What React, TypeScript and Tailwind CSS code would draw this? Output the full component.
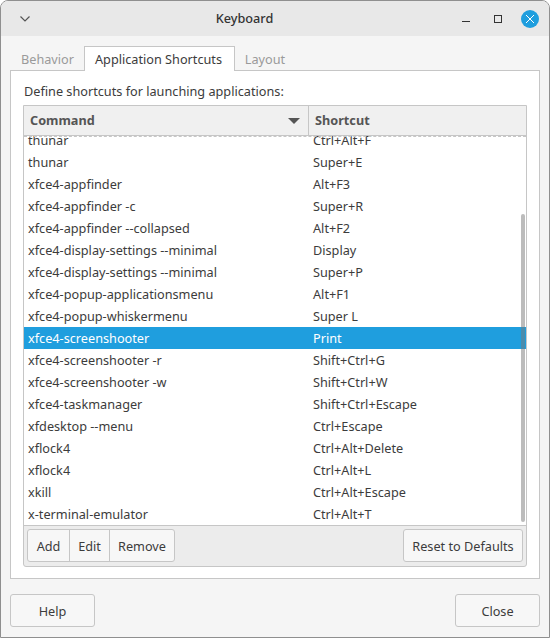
const rows: [string, string][] = [
  ["thunar", "Ctrl+Alt+F"],
  ["thunar", "Super+E"],
  ["xfce4-appfinder", "Alt+F3"],
  ["xfce4-appfinder -c", "Super+R"],
  ["xfce4-appfinder --collapsed", "Alt+F2"],
  ["xfce4-display-settings --minimal", "Display"],
  ["xfce4-display-settings --minimal", "Super+P"],
  ["xfce4-popup-applicationsmenu", "Alt+F1"],
  ["xfce4-popup-whiskermenu", "Super L"],
  ["xfce4-screenshooter", "Print"],
  ["xfce4-screenshooter -r", "Shift+Ctrl+G"],
  ["xfce4-screenshooter -w", "Shift+Ctrl+W"],
  ["xfce4-taskmanager", "Shift+Ctrl+Escape"],
  ["xfdesktop --menu", "Ctrl+Escape"],
  ["xflock4", "Ctrl+Alt+Delete"],
  ["xflock4", "Ctrl+Alt+L"],
  ["xkill", "Ctrl+Alt+Escape"],
  ["x-terminal-emulator", "Ctrl+Alt+T"],
];

export default function App() {
  return (
    <div className="w-[550px] h-[638px] bg-white font-['Noto_Sans',sans-serif] text-[12.7px] text-[#3c3c3c]">
      <div className="h-full flex flex-col rounded-t-[8px] border border-[#8f8f8f] bg-[#f5f5f5] overflow-hidden">
        <div className="h-[35px] shrink-0 bg-[#e8e8e8] flex items-center justify-between pl-[18px] pr-[10px] relative">
          <svg width="12" height="8" viewBox="0 0 12 8" fill="none" stroke="#555" strokeWidth="1.2">
            <path d="M1.5 1.5 L6 6 L10.5 1.5" />
          </svg>
          <div className="font-medium text-[#333] mr-[4px]">Keyboard</div>
          <div className="flex items-center">
            <div className="w-[8px] h-[1.5px] bg-[#333] mt-[6px] mr-[24px]"></div>
            <div className="w-[8px] h-[8px] border-[1.5px] border-[#333] mr-[19px]"></div>
            <div className="w-[18px] h-[18px] rounded-full bg-[#1f9ede] flex items-center justify-center">
              <svg width="10" height="10" viewBox="0 0 10 10" stroke="#fff" strokeWidth="1">
                <path d="M1 1 L9 9 M9 1 L1 9" />
              </svg>
            </div>
          </div>
        </div>

        <div className="flex-1 flex flex-col px-[9px]">
          <div className="flex h-[35px] items-end pl-[1px] shrink-0 -mb-[1px] relative">
            <div className="w-[73px] h-[24px] pt-[2px] flex items-center justify-center text-[#9a9a9a]">Behavior</div>
            <div className="w-[151px] h-[25px] pt-[2px] pr-[2px] flex items-center justify-center bg-white border border-b-0 border-[#c6c6c6] text-[#3c3c3c]">
              Application Shortcuts
            </div>
            <div className="w-[60px] h-[24px] pt-[2px] flex items-center justify-center text-[#9a9a9a]">Layout</div>
          </div>

          <div className="h-[509px] shrink-0 border border-[#c6c6c6] bg-white pt-[10px] px-[12px]">
            <div className="h-[24px] leading-[20px] pl-[1px]">Define shortcuts for launching applications:</div>
            <div className="h-[462px] border border-[#c6c6c6] rounded-b-[3px] flex flex-col bg-[#ececec]">
              <div className="h-[30px] shrink-0 bg-[#f0f0f0] border-b border-[#c6c6c6] flex font-bold text-[#555]">
                <div className="w-[285px] pl-[6px] pr-[8px] pt-[1px] flex items-center justify-between border-r border-[#c6c6c6]">
                  <span>Command</span>
                  <svg width="12" height="6" viewBox="0 0 12 6"><path d="M0 0 H12 L6 6 Z" fill="#555" /></svg>
                </div>
                <div className="px-[6px] pt-[1px] flex items-center">Shortcut</div>
              </div>

              <div className="relative h-[390px] shrink-0 bg-white overflow-hidden border-b border-[#c6c6c6]">
                <div className="-mt-[7px]">
                  {rows.map(([cmd, key], i) => (
                    <div
                      key={i}
                      className={
                        i === 9
                          ? "h-[22px] pt-[2px] flex items-center bg-[#1f9ede] text-white"
                          : "h-[22px] pt-[2px] flex items-center text-[#3c3c3c]"
                      }
                    >
                      <div className="w-[285px] pl-[4px]">{cmd}</div>
                      <div className="pl-[4px]">{key}</div>
                    </div>
                  ))}
                </div>
                <div className="absolute top-0 left-0 right-0 border-t border-dashed border-[#c6c6c6]"></div>
                <div className="absolute right-[1px] top-[78px] bottom-[3px] w-[4px] rounded-full bg-[#7a7a7a]/50"></div>
              </div>

              <div className="flex-1 flex items-start justify-between px-[3px] pt-[3px]">
                <div className="flex h-[33px] rounded-[3px] border border-[#c6c6c6] bg-[#f7f7f7]">
                  <div className="w-[42px] pt-[2px] flex items-center justify-center border-r border-[#c6c6c6]">Add</div>
                  <div className="w-[40px] pt-[2px] flex items-center justify-center border-r border-[#c6c6c6]">Edit</div>
                  <div className="w-[64px] pt-[2px] flex items-center justify-center">Remove</div>
                </div>
                <div className="w-[120px] h-[33px] pt-[2px] rounded-[3px] border border-[#c6c6c6] bg-[#f7f7f7] flex items-center justify-center">
                  Reset to Defaults
                </div>
              </div>
            </div>
          </div>

          <div className="flex justify-between pt-[15px]">
            <div className="w-[85px] h-[33px] pt-[2px] rounded-[3px] border border-[#c6c6c6] bg-[#f7f7f7] flex items-center justify-center">Help</div>
            <div className="w-[85px] h-[33px] pt-[2px] rounded-[3px] border border-[#c6c6c6] bg-[#f7f7f7] flex items-center justify-center">Close</div>
          </div>
        </div>
      </div>
    </div>
  );
}
